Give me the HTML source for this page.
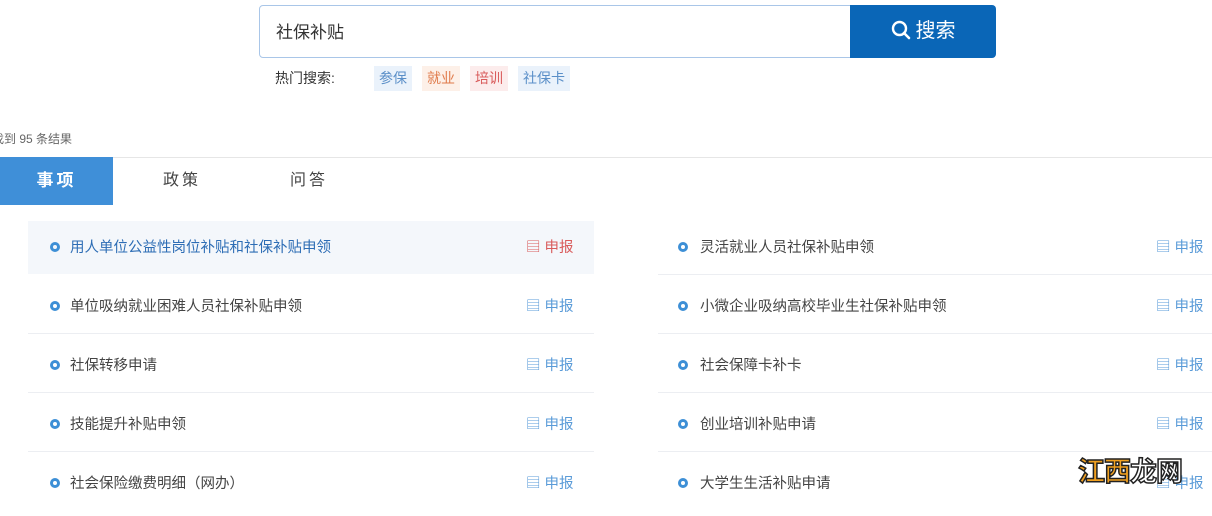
<!DOCTYPE html><html><head><meta charset="utf-8"><style>
*{margin:0;padding:0;box-sizing:border-box}
body{width:1212px;height:496px;overflow:hidden;background:#fff;font-family:"Liberation Sans","Noto Sans CJK SC",sans-serif;position:relative;color:#333}
.abs{position:absolute}
.input{left:259px;top:5px;width:592px;height:53px;border:1px solid #a9c6e8;border-radius:4px 0 0 4px;font-size:17px;line-height:54px;padding-left:16px;color:#333}
.btn{left:850px;top:5px;width:146px;height:53px;background:#0a66b7;border-radius:0 4px 4px 0;color:#fff;font-size:20px;line-height:53px;text-align:center}
.tag{top:66px;height:25px;line-height:25px;font-size:14px;padding:0 5px}
.row{height:59px;border-bottom:1px solid #eceef2;font-size:14.5px;line-height:64px}
.row .dot{position:absolute;top:26px;width:10px;height:10px;border:3px solid #3d8fd6;border-radius:50%}
.rp{position:absolute;color:#5a9bd8;font-size:14.5px}
</style></head><body>
<div class="abs input">社保补贴</div>
<div class="abs btn"><svg width="20" height="20" viewBox="0 0 20 20" style="vertical-align:-3px;margin-right:5px"><circle cx="8.5" cy="8.5" r="6.5" fill="none" stroke="#fff" stroke-width="2.4"/><line x1="13" y1="13" x2="18" y2="18" stroke="#fff" stroke-width="2.6" stroke-linecap="round"/></svg>搜索</div>
<div class="abs" style="left:275px;top:66px;line-height:25px;font-size:14px;color:#333">热门搜索:</div>
<div class="abs tag" style="left:374px;background:#eaf2fb;color:#5a8fc8">参保</div>
<div class="abs tag" style="left:422px;background:#fdf0e8;color:#e07a4a">就业</div>
<div class="abs tag" style="left:470px;background:#fcecec;color:#d95b5b">培训</div>
<div class="abs tag" style="left:518px;background:#eaf2fb;color:#5a8fc8">社保卡</div>
<div class="abs" style="left:-8px;top:130px;font-size:12px;color:#666">找到 95 条结果</div>
<div class="abs" style="left:0;top:157px;width:1212px;height:1px;background:#e6e6e6"></div>
<div class="abs" style="left:0;top:157px;width:113px;height:48px;background:#3f8fd8;color:#fff;font-size:17px;font-weight:bold;line-height:48px;text-align:center;letter-spacing:3px">事项</div>
<div class="abs" style="left:163px;top:157px;line-height:48px;font-size:16px;color:#444;letter-spacing:3px">政策</div>
<div class="abs" style="left:290px;top:157px;line-height:48px;font-size:16px;color:#444;letter-spacing:3px">问答</div>
<div class="abs" style="left:28px;top:221px;width:566px;height:53px;background:#f4f7fb"></div>
<div class="abs" style="left:28px;top:216px;width:566px;color:#444">
<div class="row" style="position:relative;color:#2d6db5;border-bottom-color:transparent"><span class="dot" style="left:22px"></span><span style="position:absolute;left:42px">用人单位公益性岗位补贴和社保补贴申领</span><span class="rp" style="left:498px;color:#d95b5b">▤ 申报</span></div>
<div class="row" style="position:relative"><span class="dot" style="left:22px"></span><span style="position:absolute;left:42px">单位吸纳就业困难人员社保补贴申领</span><span class="rp" style="left:498px">▤ 申报</span></div>
<div class="row" style="position:relative"><span class="dot" style="left:22px"></span><span style="position:absolute;left:42px">社保转移申请</span><span class="rp" style="left:498px">▤ 申报</span></div>
<div class="row" style="position:relative"><span class="dot" style="left:22px"></span><span style="position:absolute;left:42px">技能提升补贴申领</span><span class="rp" style="left:498px">▤ 申报</span></div>
<div class="row" style="position:relative;border:none"><span class="dot" style="left:22px"></span><span style="position:absolute;left:42px">社会保险缴费明细（网办）</span><span class="rp" style="left:498px">▤ 申报</span></div>
</div>
<div class="abs" style="left:658px;top:216px;width:554px;color:#444">
<div class="row" style="position:relative"><span class="dot" style="left:20px"></span><span style="position:absolute;left:42px">灵活就业人员社保补贴申领</span><span class="rp" style="left:498px">▤ 申报</span></div>
<div class="row" style="position:relative"><span class="dot" style="left:20px"></span><span style="position:absolute;left:42px">小微企业吸纳高校毕业生社保补贴申领</span><span class="rp" style="left:498px">▤ 申报</span></div>
<div class="row" style="position:relative"><span class="dot" style="left:20px"></span><span style="position:absolute;left:42px">社会保障卡补卡</span><span class="rp" style="left:498px">▤ 申报</span></div>
<div class="row" style="position:relative"><span class="dot" style="left:20px"></span><span style="position:absolute;left:42px">创业培训补贴申请</span><span class="rp" style="left:498px">▤ 申报</span></div>
<div class="row" style="position:relative;border:none"><span class="dot" style="left:20px"></span><span style="position:absolute;left:42px">大学生生活补贴申请</span><span class="rp" style="left:498px">▤ 申报</span></div>
</div>
<div class="abs" style="left:1078px;top:450px;font-size:27px;font-weight:bold;color:#f0a020;-webkit-text-stroke:1.5px #222;letter-spacing:-1px">江西<span style="color:#fff">龙网</span></div>
</body></html>
